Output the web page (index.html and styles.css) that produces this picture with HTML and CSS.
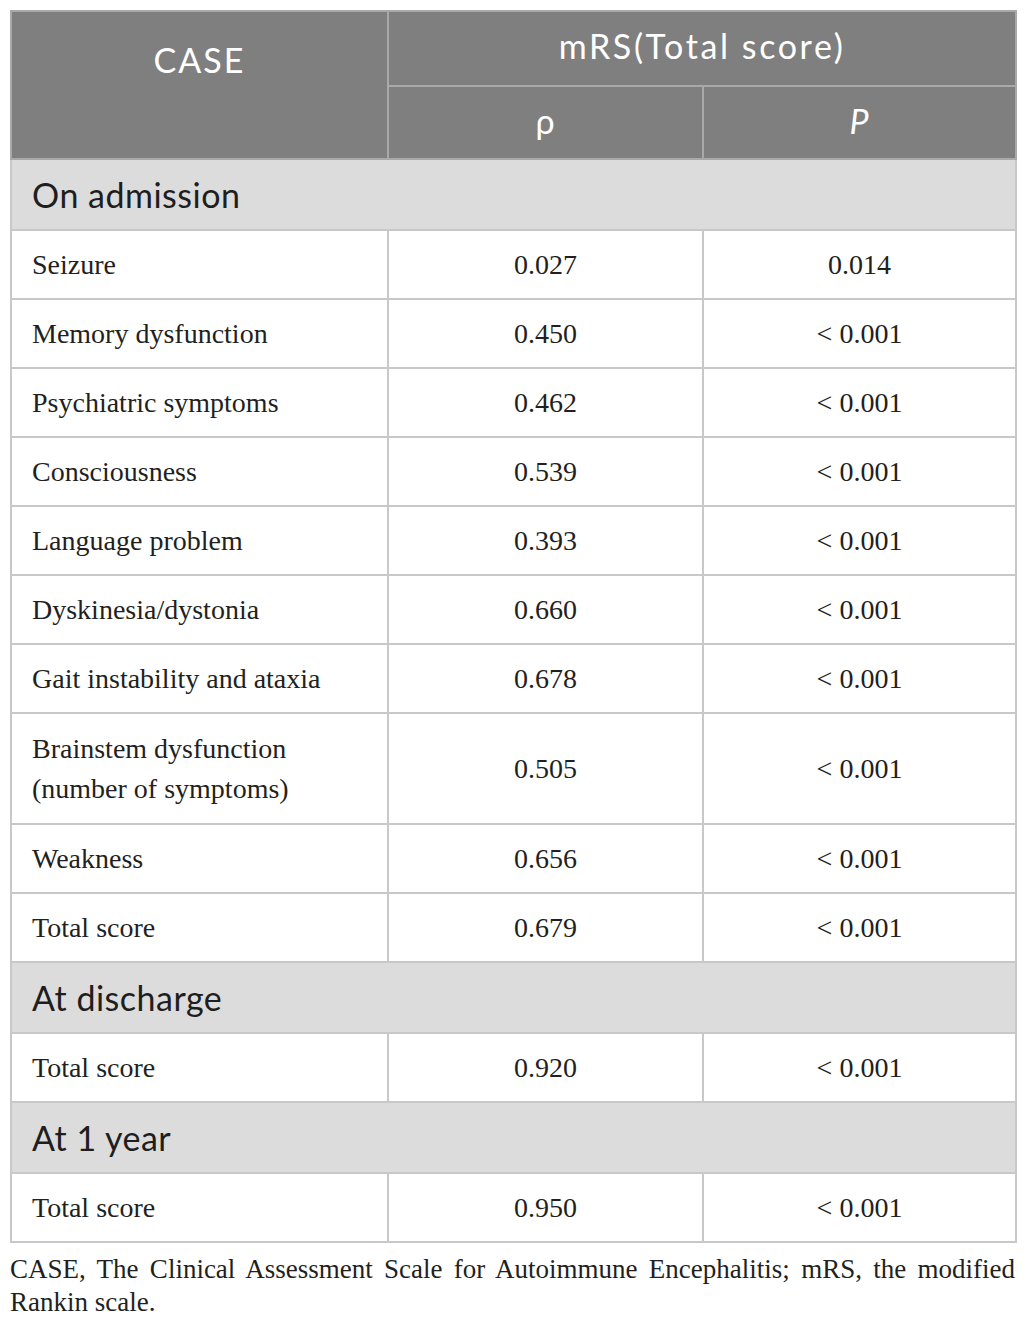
FILE: index.html
```html
<!DOCTYPE html>
<html>
<head>
<meta charset="utf-8">
<link rel="stylesheet" href="styles.css">
</head>
<body>
<table class="tbl">
  <colgroup>
    <col class="c1"><col class="c2"><col class="c3">
  </colgroup>
  <thead>
    <tr class="h1">
      <th rowspan="2" class="case">CASE</th>
      <th colspan="2" class="mrs">mRS(Total score)</th>
    </tr>
    <tr class="h2">
      <th>ρ</th>
      <th><i>P</i></th>
    </tr>
  </thead>
  <tbody>
    <tr class="sec"><td colspan="3">On admission</td></tr>
    <tr><td>Seizure</td><td class="num">0.027</td><td class="num">0.014</td></tr>
    <tr><td>Memory dysfunction</td><td class="num">0.450</td><td class="num">&lt; 0.001</td></tr>
    <tr><td>Psychiatric symptoms</td><td class="num">0.462</td><td class="num">&lt; 0.001</td></tr>
    <tr><td>Consciousness</td><td class="num">0.539</td><td class="num">&lt; 0.001</td></tr>
    <tr><td>Language problem</td><td class="num">0.393</td><td class="num">&lt; 0.001</td></tr>
    <tr><td>Dyskinesia/dystonia</td><td class="num">0.660</td><td class="num">&lt; 0.001</td></tr>
    <tr><td>Gait instability and ataxia</td><td class="num">0.678</td><td class="num">&lt; 0.001</td></tr>
    <tr class="tall"><td>Brainstem dysfunction<br>(number of symptoms)</td><td class="num">0.505</td><td class="num">&lt; 0.001</td></tr>
    <tr><td>Weakness</td><td class="num">0.656</td><td class="num">&lt; 0.001</td></tr>
    <tr><td>Total score</td><td class="num">0.679</td><td class="num">&lt; 0.001</td></tr>
    <tr class="sec"><td colspan="3">At discharge</td></tr>
    <tr><td>Total score</td><td class="num">0.920</td><td class="num">&lt; 0.001</td></tr>
    <tr class="sec"><td colspan="3">At 1 year</td></tr>
    <tr><td>Total score</td><td class="num">0.950</td><td class="num">&lt; 0.001</td></tr>
  </tbody>
</table>
<p class="foot">CASE, The Clinical Assessment Scale for Autoimmune Encephalitis; mRS, the modified Rankin scale.</p>
</body>
</html>
```

FILE: styles.css
```css
html, body {
  margin: 0;
  padding: 0;
  background: #ffffff;
}
body {
  padding: 10px 11px 0 10px;
}
.tbl {
  width: 1005px;
  border-collapse: collapse;
  table-layout: fixed;
  font-family: "Liberation Serif", "Times New Roman", serif;
  font-size: 28px;
  color: #231f20;
}
.c1 { width: 377px; }
.c2 { width: 315px; }
.c3 { width: 313px; }
.tbl th, .tbl td {
  border: 2px solid #c8c8c8;
}
.tbl thead th {
  background: #7f7f7f;
  color: #ffffff;
  font-family: Lato, "Open Sans", sans-serif;
  font-weight: 400;
  font-size: 34px;
  letter-spacing: 1px;
  text-align: center;
  padding: 0;
  border-color: #a9a9a9;
}
.tbl thead .h1 th {
  height: 67px;
  vertical-align: middle;
  padding-bottom: 6px;
}
.tbl thead .h1 th.mrs {
  letter-spacing: 2.6px;
}
.tbl thead .h2 th {
  height: 67px;
  padding-bottom: 4px;
}
.tbl thead .h1 th.case {
  vertical-align: top;
  padding-top: 27px;
  padding-bottom: 0;
  letter-spacing: 2px;
}
.tbl thead i {
  font-style: italic;
}
.tbl td {
  height: 67px;
  padding: 0 0 0 20px;
  vertical-align: middle;
}
.tbl td.num {
  text-align: center;
  padding: 0;
}
.tbl tr.tall td {
  height: 109px;
  line-height: 40px;
}
.tbl tr.sec td {
  background: #dcdcdc;
  font-family: Lato, "Open Sans", sans-serif;
  font-size: 34px;
  letter-spacing: 0.5px;
  color: #1e1e1e;
  height: 69px;
  padding-left: 20px;
}
.foot {
  margin: 10px 0 0 0;
  width: 1005px;
  font-family: "Liberation Serif", "Times New Roman", serif;
  font-size: 27px;
  line-height: 33px;
  color: #231f20;
  text-align: justify;
}
```
